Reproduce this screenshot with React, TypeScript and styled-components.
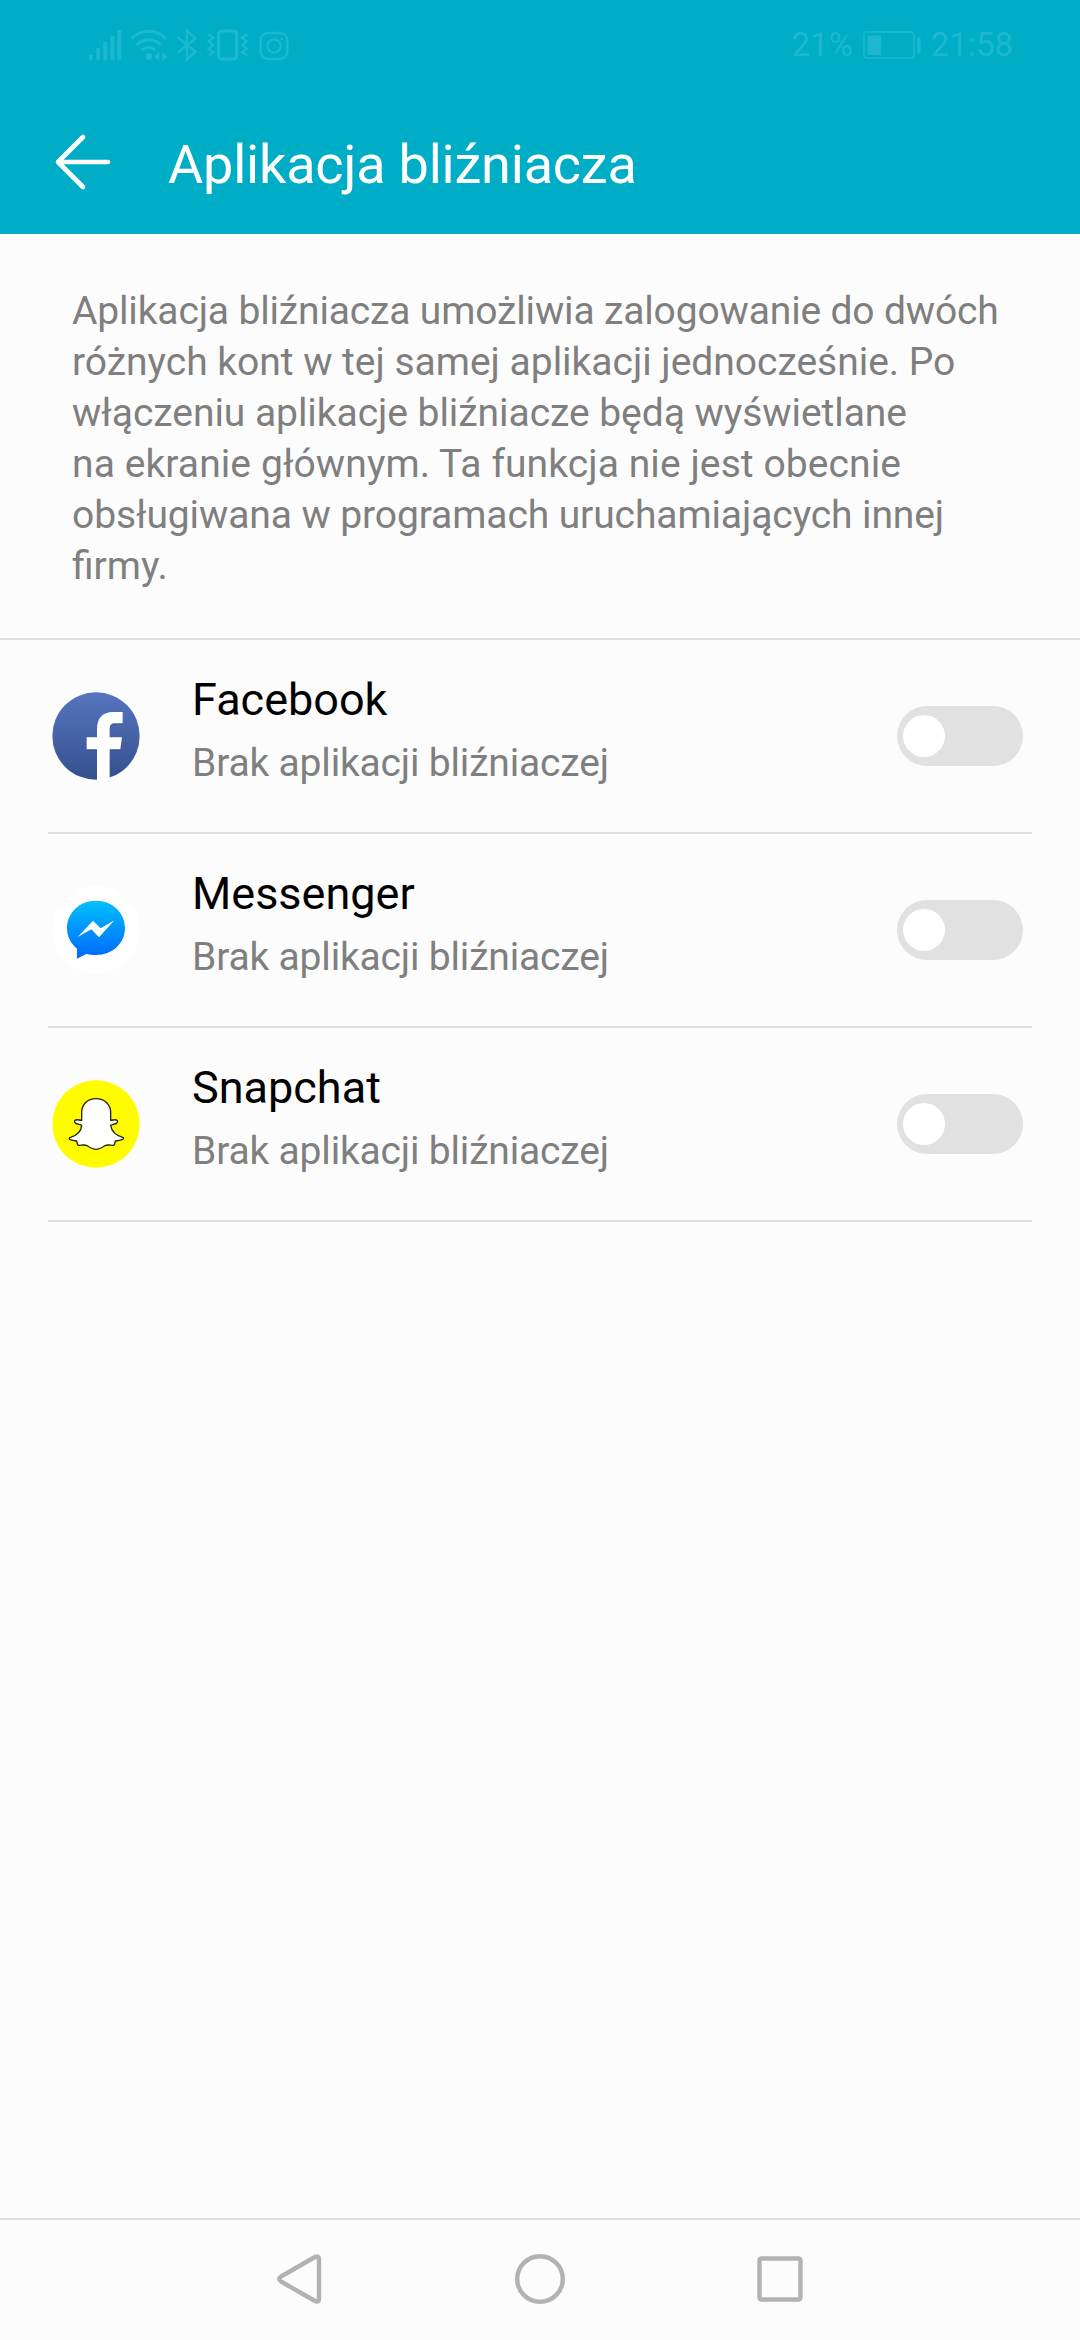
import React from 'react';
import styled, { createGlobalStyle } from 'styled-components';

const GlobalStyle = createGlobalStyle`
  *, *::before, *::after { box-sizing: border-box; }
  body { margin: 0; background: #fcfcfc; }
`;

const Screen = styled.div`
  display: flex;
  flex-direction: column;
  width: 1080px;
  height: 2340px;
  background: #fcfcfc;
  font-family: Roboto, 'Noto Sans', sans-serif;
  overflow: hidden;
`;

const Header = styled.header`
  height: 234px;
  background: #00adc6;
  flex: none;
`;

const StatusBar = styled.div`
  display: flex;
  justify-content: space-between;
  align-items: center;
  height: 90px;
  padding: 0 67px 0 85px;
  color: #1db8cf;
  font-size: 33px;
  line-height: 40px;
`;

const StatusGroup = styled.div<{ $gap: number }>`
  display: flex;
  align-items: center;
  gap: ${(p) => p.$gap}px;
`;

const StatusSvg = styled.svg`
  display: block;
  flex: none;
  fill: none;
  stroke: currentColor;
`;

const TitleBar = styled.div`
  display: flex;
  align-items: flex-start;
  padding: 43px 0 0 50px;
  color: #fff;
`;

const BackButton = styled.button`
  display: flex;
  width: 64px;
  height: 60px;
  margin: 0 54px 0 0;
  padding: 0;
  border: 0;
  background: none;
  color: #fff;
`;

const Title = styled.h1`
  margin: 0;
  font-size: 54px;
  line-height: 64px;
  font-weight: 400;
  letter-spacing: -0.2px;
  white-space: nowrap;
`;

const Description = styled.p`
  display: flex;
  flex-direction: column;
  margin: 0;
  padding: 52px 72px 46px;
  border-bottom: 2px solid #e1e1e1;
  color: #7f7f7f;
  font-size: 39px;
  line-height: 51px;
`;

const Line = styled.span<{ $track: number }>`
  letter-spacing: ${(p) => p.$track}px;
  white-space: nowrap;
`;

const AppList = styled.ul`
  flex: 1;
  margin: 0;
  padding: 0 48px;
  list-style: none;
`;

const AppRow = styled.li`
  display: flex;
  align-items: center;
  height: 194px;
  padding: 0 9px 0 4px;
  border-bottom: 2px solid #e1e1e1;
`;

const AppIcon = styled.svg`
  display: block;
  flex: none;
  width: 88px;
  height: 88px;
`;

const AppText = styled.div`
  display: flex;
  flex: 1;
  flex-direction: column;
  gap: 14px;
  align-self: flex-start;
  padding: 33px 0 0 52px;
`;

const AppName = styled.span`
  color: #000;
  font-size: 45px;
  line-height: 53px;
`;

const AppState = styled.span`
  color: #7f7f7f;
  font-size: 39px;
  line-height: 46px;
  letter-spacing: -0.17px;
`;

const Switch = styled.button`
  display: flex;
  align-items: center;
  width: 126px;
  height: 60px;
  padding: 0 6px;
  border: 0;
  border-radius: 30px;
  background: #e1e1e1;
`;

const Knob = styled.span`
  width: 42px;
  height: 42px;
  border-radius: 50%;
  background: #fff;
`;

const NavBar = styled.nav`
  display: flex;
  justify-content: space-between;
  height: 122px;
  padding: 33px 270px 0;
  border-top: 2px solid #e1e1e1;
`;

const NavIcon = styled.svg`
  display: block;
  width: 60px;
  height: 52px;
  fill: none;
  stroke: #b2b2b2;
  stroke-width: 4.4;
  stroke-linejoin: round;
`;

const FacebookIcon = () => (
  <AppIcon viewBox="0 0 264 264">
    <defs>
      <linearGradient id="fb" x1="0" y1="0" x2="0" y2="1">
        <stop offset="0" stopColor="#5675bd" />
        <stop offset="1" stopColor="#35508f" />
      </linearGradient>
      <clipPath id="fbClip">
        <rect width="264" height="264" />
      </clipPath>
    </defs>
    <circle cx="132" cy="132" r="131" fill="url(#fb)" />
    <g clipPath="url(#fbClip)">
      <path
        d="M135 270V172H104V136H135V113C135 79 151 60 184 60H212V94H191C177 94 173 99 173 112V136H210L205 172H173V270Z"
        fill="#1f3570"
        opacity=".22"
        transform="translate(1 4)"
      />
      <path
        d="M135 270V172H104V136H135V113C135 79 151 60 184 60H212V94H191C177 94 173 99 173 112V136H210L205 172H173V270Z"
        fill="#fff"
      />
    </g>
  </AppIcon>
);

const MessengerIcon = () => (
  <AppIcon viewBox="0 0 264 264">
    <defs>
      <linearGradient id="ms" x1="0" y1="0" x2="0" y2="1">
        <stop offset="0" stopColor="#00c0fb" />
        <stop offset="1" stopColor="#0068ff" />
      </linearGradient>
    </defs>
    <circle cx="132" cy="132" r="131" fill="#fff" />
    <path
      d="M132 44C83 44 45 80 45 126C45 152 57 173 75 188V218L104 203C113 206 122 207 132 207C181 207 219 172 219 126C219 80 181 44 132 44Z"
      fill="url(#ms)"
    />
    <path d="M77 153L123 104L146 127L187 103L141 154L118 130Z" fill="#fff" />
  </AppIcon>
);

const SnapchatIcon = () => (
  <AppIcon viewBox="0 0 264 264">
    <circle cx="132" cy="132" r="131" fill="#fffc00" />
    <path
      d="M132 56C107 56 89 73 89 98V121C82 121 73 116 68 122C64 131 80 132 89 136C88 156 74 167 54 173C47 177 55 181 74 183C76 189 75 194 79 196C89 196 97 192 107 198C116 204 122 208 132 208C142 208 148 204 157 198C167 192 175 196 185 196C189 194 188 189 190 183C209 181 217 177 214 173C193 167 179 156 176 136C185 132 200 131 196 122C191 116 183 121 176 121V98C176 73 157 56 132 56Z"
      fill="#fff"
      stroke="#272500"
      strokeWidth="4"
      strokeLinejoin="round"
    />
  </AppIcon>
);

const apps = [
  { name: 'Facebook', Icon: FacebookIcon },
  { name: 'Messenger', Icon: MessengerIcon },
  { name: 'Snapchat', Icon: SnapchatIcon },
];

const descriptionLines = [
  { text: 'Aplikacja bliźniacza umożliwia zalogowanie do dwóch', track: -0.15 },
  { text: 'różnych kont w tej samej aplikacji jednocześnie. Po', track: -0.02 },
  { text: 'włączeniu aplikacje bliźniacze będą wyświetlane', track: -0.05 },
  { text: 'na ekranie głównym. Ta funkcja nie jest obecnie', track: 0.09 },
  { text: 'obsługiwana w programach uruchamiających innej', track: -0.1 },
  { text: 'firmy.', track: 0 },
];

// Status glyphs are drawn on a grid three times finer than the pixel.
const StatusIcons = () => (
  <StatusSvg width="205" height="40" viewBox="45 30 615 120">
    <g fill="currentColor" stroke="none">
      <rect x="57" y="119" width="11" height="17" rx="2" />
      <rect x="79" y="100" width="11" height="36" rx="2" />
      <rect x="100" y="81" width="12" height="55" rx="2" />
      <rect x="121" y="62" width="12" height="74" rx="2" />
      <rect x="142" y="45" width="12" height="91" rx="2" />
      <circle cx="236" cy="125" r="10" />
      <path d="M268 110V139L252 125Z M277 110V139L292 125Z" />
    </g>
    <path d="M184 71C214 41 258 41 288 71M200 89C221 69 251 69 272 89M216 106C228 95 244 95 256 106" strokeWidth="9" />
    <path d="M322 66L376 110L351 134V46L376 70L322 114" strokeWidth="7" />
    <rect x="446" y="48" width="54" height="84" rx="8" strokeWidth="9" />
    <path d="M416 58L430 68L416 79L430 90L416 101L430 112L416 122M532 58L516 68L530 79L516 90L530 101L516 112L532 122" strokeWidth="7" />
    <rect x="572" y="54" width="80" height="78" rx="22" strokeWidth="7" />
    <circle cx="612" cy="93" r="20" strokeWidth="7" />
    <circle cx="635" cy="72" r="4" fill="currentColor" stroke="none" />
  </StatusSvg>
);

const BatteryIcon = () => (
  <StatusSvg width="58" height="28" viewBox="0 0 58 28">
    <rect x="1" y="1" width="50" height="26" rx="3" strokeWidth="1.6" />
    <rect x="4.5" y="4.5" width="13.5" height="19.5" fill="currentColor" stroke="none" />
    <rect x="54" y="6" width="3.5" height="16" rx="1.5" fill="currentColor" stroke="none" />
  </StatusSvg>
);

export default function App() {
  return (
    <>
      <GlobalStyle />
      <Screen>
        <Header>
          <StatusBar>
            <StatusGroup $gap={0}>
              <StatusIcons />
            </StatusGroup>
            <StatusGroup $gap={10}>
              <span>21%</span>
              <BatteryIcon />
              <span>21:58</span>
            </StatusGroup>
          </StatusBar>
          <TitleBar>
            <BackButton aria-label="Wstecz">
              <svg width="64" height="60" viewBox="0 0 64 60" fill="none" stroke="currentColor" strokeWidth="4.6" strokeLinecap="round" strokeLinejoin="round">
                <path d="M33 4L8 29L33 54M8 29H58" />
              </svg>
            </BackButton>
            <Title>Aplikacja bliźniacza</Title>
          </TitleBar>
        </Header>
        <Description>
          {descriptionLines.map(({ text, track }) => (
            <Line key={text} $track={track}>
              {text}
            </Line>
          ))}
        </Description>
        <AppList>
          {apps.map(({ name, Icon }) => (
            <AppRow key={name}>
              <Icon />
              <AppText>
                <AppName>{name}</AppName>
                <AppState>Brak aplikacji bliźniaczej</AppState>
              </AppText>
              <Switch role="switch" aria-checked={false} aria-label={name}>
                <Knob />
              </Switch>
            </AppRow>
          ))}
        </AppList>
        <NavBar>
          <NavIcon viewBox="0 0 60 52">
            <path d="M49 6Q49 2.2 45 4L11 23.5Q7.5 26 11 28.5L45 48Q49 49.8 49 46Z" />
          </NavIcon>
          <NavIcon viewBox="0 0 60 52">
            <circle cx="30" cy="26" r="22.8" />
          </NavIcon>
          <NavIcon viewBox="0 0 60 52">
            <rect x="9.5" y="5.5" width="41" height="41" rx="2" />
          </NavIcon>
        </NavBar>
      </Screen>
    </>
  );
}
